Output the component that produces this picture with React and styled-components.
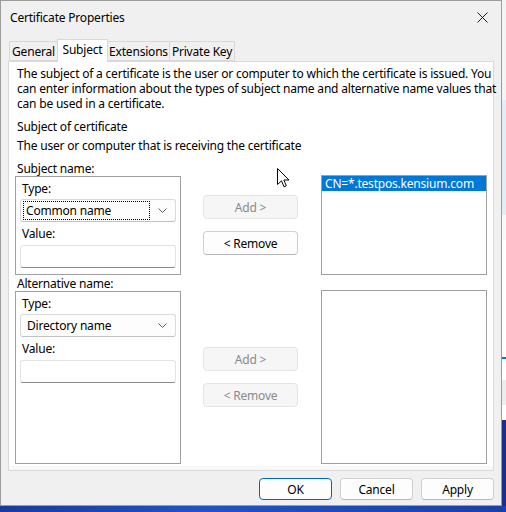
import React from "react";
import styled, { createGlobalStyle } from "styled-components";

const GlobalStyle = createGlobalStyle`
  html, body {
    margin: 0;
    padding: 0;
  }
  body {
    width: 506px;
    height: 512px;
    overflow: hidden;
    background: #1e3c9f;
    font-family: "Noto Sans", "Open Sans", sans-serif;
    font-size: 12px;
    letter-spacing: -0.2px;
    color: #000;
  }
`;

const Screen = styled.div`
  display: flex;
  height: 506px;
`;

const Dialog = styled.div`
  width: 500px;
  height: 504px;
  border: 1px solid #9c9c9c;
  background: #f0f0f0;
  display: flex;
  flex-direction: column;
`;

const BackWindow = styled.div`
  flex: 1;
  background: linear-gradient(
    to bottom,
    #f4f4f4 0 100px,
    #e3edf8 100px 215px,
    #f9f9f9 215px 240px,
    #ffffff 240px 357px,
    #0078d4 357px 359px,
    #ffffff 359px 380px,
    #ededed 380px 405px,
    #ffffff 405px 420px,
    #1c2e8c 420px
  );
`;

const Taskbar = styled.div`
  height: 6px;
  background: linear-gradient(to right, #1a3a9c, #2452c4 40%, #1b3fa8);
`;

const TitleBar = styled.div`
  height: 32px;
  display: flex;
  align-items: center;
  justify-content: space-between;
  padding: 0 10px 0 9px;
`;

const Title = styled.span`
  font-size: 12px;
`;

const CloseButton = styled.div`
  width: 12px;
  height: 12px;
  display: flex;
  align-items: center;
  justify-content: center;
  margin-right: 3px;
`;

const TabStrip = styled.div`
  height: 28px;
  display: flex;
  align-items: flex-end;
  padding-left: 8px;
`;

const Tab = styled.div`
  position: relative;
  width: ${({ width }) => width}px;
  height: ${({ active }) => (active ? 23 : 20)}px;
  margin-right: -1px;
  margin-bottom: ${({ active }) => (active ? -1 : 0)}px;
  padding-bottom: ${({ active }) => (active ? 3 : 0)}px;
  box-sizing: border-box;
  border: 1px solid #d9d9d9;
  border-bottom: ${({ active }) => (active ? "none" : "1px solid #d9d9d9")};
  background: ${({ active }) => (active ? "#ffffff" : "#f0f0f0")};
  z-index: ${({ active }) => (active ? 1 : 0)};
  display: flex;
  align-items: center;
  justify-content: center;
  white-space: nowrap;
`;

const Panel = styled.div`
  position: relative;
  margin: 0 7px;
  height: 410px;
  box-sizing: border-box;
  border: 1px solid #d9d9d9;
  background: #ffffff;
  box-shadow: inset 0 -4px 0 #f8f8f8;
  padding: 4px 8px 0;
`;

const Intro = styled.p`
  margin: 0;
  line-height: 15px;
  white-space: nowrap;
`;

const Line = styled.div`
  line-height: 15px;
  height: 15px;
  margin-top: ${({ gap }) => gap}px;
  white-space: nowrap;
`;

const Section = styled.div`
  display: grid;
  grid-template-columns: 166px 22px 95px 23px 166px;
  grid-template-rows: 15px ${({ boxHeight }) => boxHeight}px;
  margin: ${({ gap }) => gap}px 0 0 -2px;
`;

const SectionLabel = styled.div`
  grid-column: 1 / 4;
  grid-row: 1;
  line-height: 15px;
  padding-left: 2px;
  white-space: nowrap;
`;

const GroupBox = styled.div`
  grid-column: 1;
  grid-row: 2;
  border: 1px solid #a0a0a0;
  padding: 4px 4px 5px;
  display: flex;
  flex-direction: column;
`;

const FieldLabel = styled.div`
  line-height: 15px;
  height: 15px;
  padding-left: 2px;
  margin-top: ${({ gap }) => gap || 0}px;
`;

const Select = styled.div`
  margin-top: 3px;
  height: 23px;
  box-sizing: border-box;
  border: 1px solid #dadada;
  border-bottom-color: #c2c2c2;
  border-radius: 3px;
  background: #fdfdfd;
  display: flex;
  align-items: center;
  padding: 0 8px 0 2px;
`;

const SelectText = styled.div`
  flex: 1;
  height: 19px;
  box-sizing: border-box;
  padding-left: ${({ focused }) => (focused ? 2 : 3)}px;
  margin-right: 8px;
  border: 1px dotted ${({ focused }) => (focused ? "#000" : "transparent")};
  display: flex;
  align-items: center;
  white-space: nowrap;
`;

const TextBox = styled.div`
  margin-top: 4px;
  height: 23px;
  box-sizing: border-box;
  border: 1px solid #e3e3e3;
  border-bottom-color: #8a8a8a;
  border-radius: 3px;
  background: #ffffff;
`;

const ButtonColumn = styled.div`
  grid-column: 3;
  grid-row: 2;
  padding-top: ${({ offset }) => offset}px;
  display: flex;
  flex-direction: column;
  gap: 12px;
`;

const Button = styled.div`
  height: 24px;
  box-sizing: border-box;
  border: 1px solid ${({ disabled }) => (disabled ? "#e4e4e4" : "#d0d0d0")};
  border-bottom-color: ${({ disabled }) => (disabled ? "#e4e4e4" : "#b8b8b8")};
  border-radius: 4px;
  background: ${({ disabled }) => (disabled ? "#f6f6f6" : "#fdfdfd")};
  color: ${({ disabled }) => (disabled ? "#8a8a8a" : "#000")};
  display: flex;
  align-items: center;
  justify-content: center;
  white-space: nowrap;
`;

const ListBox = styled.div`
  grid-column: 5;
  grid-row: 2;
  margin-top: -1px;
  border: 1px solid #a0a0a0;
  background: #ffffff;
`;

const ListItem = styled.div`
  height: 15px;
  line-height: 15px;
  padding-left: 3px;
  background: ${({ selected }) => (selected ? "#0078d7" : "transparent")};
  color: ${({ selected }) => (selected ? "#fff" : "#000")};
  white-space: nowrap;
`;

const Cursor = styled.svg`
  position: absolute;
  left: 268px;
  top: 106px;
`;

const Footer = styled.div`
  flex: 1;
  display: flex;
  justify-content: flex-end;
  gap: 8px;
  padding: 7px 7px 0 0;
`;

const FooterButton = styled.div`
  width: 73px;
  height: 22px;
  box-sizing: border-box;
  border: 1px solid ${({ primary }) => (primary ? "#0067c0" : "#d0d0d0")};
  border-bottom-color: ${({ primary }) => (primary ? "#0067c0" : "#b8b8b8")};
  border-radius: 4px;
  background: #fdfdfd;
  display: flex;
  align-items: center;
  justify-content: center;
`;

const Chevron = () => (
  <svg width="9" height="5" viewBox="0 0 9 5">
    <path d="M0.5 0.5 L4.5 4.5 L8.5 0.5" fill="none" stroke="#5c5c5c" strokeWidth="1" />
  </svg>
);

const NameGroup = ({ label, value, focused, boxHeight, gap, buttonOffset, addDisabled, removeDisabled, items }) => (
  <Section boxHeight={boxHeight} gap={gap}>
    <SectionLabel>{label}</SectionLabel>
    <GroupBox>
      <FieldLabel>Type:</FieldLabel>
      <Select>
        <SelectText focused={focused}>{value}</SelectText>
        <Chevron />
      </Select>
      <FieldLabel gap={4}>Value:</FieldLabel>
      <TextBox />
    </GroupBox>
    <ButtonColumn offset={buttonOffset}>
      <Button disabled={addDisabled}>Add &gt;</Button>
      <Button disabled={removeDisabled}>&lt; Remove</Button>
    </ButtonColumn>
    <ListBox>
      {items.map((item) => (
        <ListItem key={item} selected>
          {item}
        </ListItem>
      ))}
    </ListBox>
  </Section>
);

const tabs = [
  { name: "General", width: 49 },
  { name: "Subject", width: 51, active: true },
  { name: "Extensions", width: 63 },
  { name: "Private Key", width: 66 },
];

export default function App() {
  return (
    <>
      <GlobalStyle />
      <Screen>
        <Dialog>
          <TitleBar>
            <Title>Certificate Properties</Title>
            <CloseButton>
              <svg width="11" height="11" viewBox="0 0 11 11">
                <path d="M0.5 0.5 L10.5 10.5 M10.5 0.5 L0.5 10.5" stroke="#1a1a1a" strokeWidth="1" />
              </svg>
            </CloseButton>
          </TitleBar>
          <TabStrip>
            {tabs.map((tab) => (
              <Tab key={tab.name} width={tab.width} active={tab.active}>
                {tab.name}
              </Tab>
            ))}
          </TabStrip>
          <Panel>
            <Intro>
              The subject of a certificate is the user or computer to which the certificate is issued. You
              <br />
              can enter information about the types of subject name and alternative name values that
              <br />
              can be used in a certificate.
            </Intro>
            <Line gap={8}>Subject of certificate</Line>
            <Line gap={4}>The user or computer that is receiving the certificate</Line>
            <NameGroup
              label="Subject name:"
              value="Common name"
              focused
              boxHeight={99}
              gap={8}
              buttonOffset={19}
              addDisabled
              items={["CN=*.testpos.kensium.com"]}
            />
            <NameGroup
              label="Alternative name:"
              value="Directory name"
              boxHeight={173}
              gap={1}
              buttonOffset={56}
              addDisabled
              removeDisabled
              items={[]}
            />
            <Cursor width="13" height="20" viewBox="0 0 13 20">
              <path
                d="M0.5 0.5 L0.5 16.5 L4.5 12.8 L7 18.8 L9.3 17.8 L6.9 12 L12 12 Z"
                fill="#fff"
                stroke="#000"
                strokeWidth="1"
                strokeLinejoin="round"
              />
            </Cursor>
          </Panel>
          <Footer>
            <FooterButton primary>OK</FooterButton>
            <FooterButton>Cancel</FooterButton>
            <FooterButton>Apply</FooterButton>
          </Footer>
        </Dialog>
        <BackWindow />
      </Screen>
      <Taskbar />
    </>
  );
}
